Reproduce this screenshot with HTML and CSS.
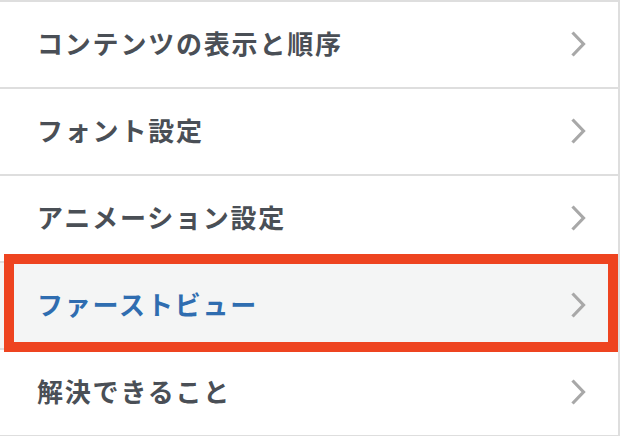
FILE: index.html
```html
<!DOCTYPE html>
<html lang="ja">
<head>
<meta charset="utf-8">
<title>メニュー</title>
<link rel="stylesheet" href="styles.css">
</head>
<body>
<ul class="menu">
  <li class="menu-item">
    <a class="menu-link" href="#">
      <span class="menu-label">コンテンツの表示と順序</span>
      <svg class="chevron" viewBox="0 0 16 28" width="16" height="28"><polyline points="2.5,2.5 13.5,14 2.5,25.5"/></svg>
    </a>
  </li>
  <li class="menu-item">
    <a class="menu-link" href="#">
      <span class="menu-label">フォント設定</span>
      <svg class="chevron" viewBox="0 0 16 28" width="16" height="28"><polyline points="2.5,2.5 13.5,14 2.5,25.5"/></svg>
    </a>
  </li>
  <li class="menu-item">
    <a class="menu-link" href="#">
      <span class="menu-label">アニメーション設定</span>
      <svg class="chevron" viewBox="0 0 16 28" width="16" height="28"><polyline points="2.5,2.5 13.5,14 2.5,25.5"/></svg>
    </a>
  </li>
  <li class="menu-item is-active">
    <a class="menu-link" href="#">
      <span class="menu-label">ファーストビュー</span>
      <svg class="chevron" viewBox="0 0 16 28" width="16" height="28"><polyline points="2.5,2.5 13.5,14 2.5,25.5"/></svg>
    </a>
    <span class="highlight-frame" aria-hidden="true"></span>
  </li>
  <li class="menu-item">
    <a class="menu-link" href="#">
      <span class="menu-label">解決できること</span>
      <svg class="chevron" viewBox="0 0 16 28" width="16" height="28"><polyline points="2.5,2.5 13.5,14 2.5,25.5"/></svg>
    </a>
  </li>
</ul>
</body>
</html>
```
FILE: styles.css
```css
html, body {
  margin: 0;
  padding: 0;
  background: #ffffff;
}

body {
  width: 620px;
  height: 436px;
  overflow: hidden;
  font-family: "Noto Sans CJK JP", "Noto Sans", sans-serif;
}

.menu {
  list-style: none;
  margin: 0;
  padding: 0;
  width: 618px;
  border-top: 2px solid #dedede;
  border-right: 2px solid #dedede;
}

.menu-item {
  position: relative;
  border-bottom: 2px solid #dedede;
}

.menu-link {
  display: flex;
  align-items: center;
  justify-content: space-between;
  height: 85px;
  padding: 0 32px 0 37px;
  text-decoration: none;
  color: #4a4f56;
}

.menu-label {
  font-size: 26px;
  font-weight: 700;
  letter-spacing: 1.8px;
  line-height: 1;
  margin-top: -3px;
}

.chevron {
  flex: none;
  margin-top: -1px;
}

.chevron polyline {
  fill: none;
  stroke: #a8a8a8;
  stroke-width: 3.2;
  stroke-linejoin: miter;
}

.is-active .menu-link {
  background: #f4f5f5;
  color: #2f6db0;
}

.highlight-frame {
  position: absolute;
  left: 4px;
  right: 0;
  top: -9px;
  bottom: -4px;
  border: 10px solid #ee4420;
  pointer-events: none;
}
```
